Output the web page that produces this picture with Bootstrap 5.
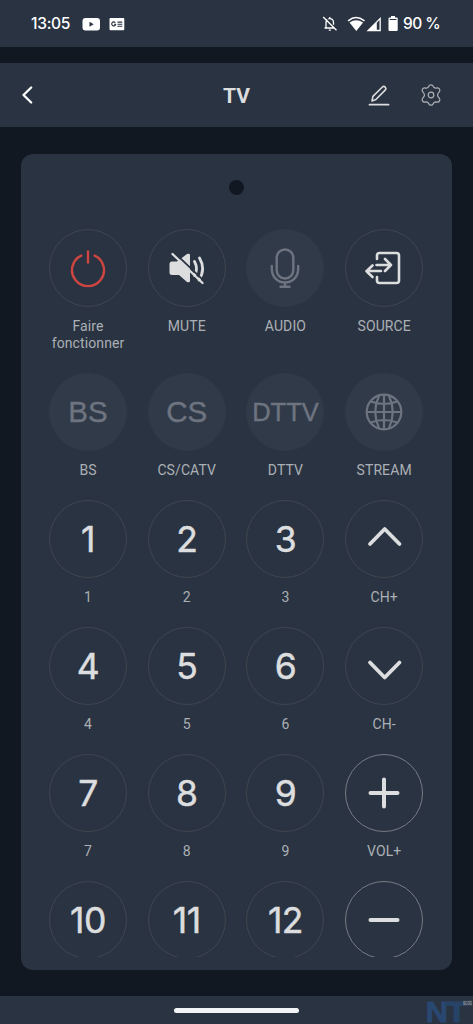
<!DOCTYPE html>
<html lang="fr">
<head>
<meta charset="utf-8">
<meta name="viewport" content="width=device-width, initial-scale=1">
<title>TV</title>
<link href="https://cdn.jsdelivr.net/npm/bootstrap@5.3.0/dist/css/bootstrap.min.css" rel="stylesheet">
<style>
  :root { --surface: #2a3341; --ground: #121822; --ink: #dcdddf; --soft: #aab0b5; --off: #6d7480; }
  body { background: var(--ground); color: var(--ink); font-family: Roboto, sans-serif; height: 1024px; overflow: hidden; }
  svg { display: block; flex: none; fill: none; stroke: currentColor; stroke-linecap: round; stroke-linejoin: round; }
  .surface { background: var(--surface); }
  .statusbar { height: 47px; padding: 0 33px 0 31px; color: #fff; }
  .clock { font: 500 15.6px/1 Inter, sans-serif; letter-spacing: -.3px; width: 41px; white-space: nowrap; }
  .level { font: 500 15.5px/1 Inter, sans-serif; letter-spacing: -.6px; white-space: nowrap; }
  .titlebar { height: 64px; margin-top: 16px; padding: 0 31px 0 20px; }
  .titlebar h1 { font: 700 21px/1 Roboto, sans-serif; width: 60px; padding-top: 2px; }
  .side-left { width: 186.5px; color: #fff; }
  .side-right { width: 175.5px; }
  .gear { color: #aeb1b6; }
  .power { color: #cd4540; }
  .remote { width: 431px; height: 816px; margin: 27px 0 0 21px; border-radius: 12px; padding: 26px 18.5px 13px 17.7px; }
  .led { width: 15px; height: 15px; border-radius: 50%; background: var(--ground); }
  .keys { height: 728px; margin-top: 34px; overflow: hidden; }
  .keys .row { margin-top: -.5px; }
  .key { padding-bottom: 21px; text-align: center; }
  .disc { width: 78px; height: 78px; border-radius: 50%; border: 1px solid #404650; font: 400 35.5px/1 Inter, sans-serif; letter-spacing: -.5px; -webkit-text-stroke: .5px; color: var(--ink); background: none; padding: 0; }
  .digit { padding-top: 2px; }
  .disc.bright { border-color: #777b84; }
  .disc.off { background: #313a48; border-color: #313a48; color: var(--off); letter-spacing: 0; font: 29.5px/1 "Liberation Sans", sans-serif; -webkit-text-stroke: .4px; padding-top: 1px; }
  .disc.wide { font-size: 25.5px; padding-top: 3px; }
  .caption { font-size: 14px; line-height: 17px; margin-top: 11px; letter-spacing: .1px; color: var(--soft); }
  .navbar-zone { height: 28px; margin-top: 26px; position: relative; }
  .handle { width: 125px; height: 5px; border-radius: 3px; background: #f3f4f5; }
  .brandmark { position: absolute; right: 0; top: 0; font-family: "Liberation Sans", sans-serif; font-weight: 700; }
</style>
</head>
<body>
<header class="statusbar surface d-flex align-items-center">
  <span class="clock">13:05</span>
  <svg style="margin-left:10px" width="19" height="14" viewBox="0 0 19 14"><rect x=".5" y="1" width="17.500" height="12.500" rx="3" fill="#fff" stroke="none"/><path d="M7.500 4.700v5l4.200-2.500z" fill="#2a3341" stroke="none"/></svg>
  <svg style="margin-left:8px" width="16" height="14" viewBox="0 0 16 14"><rect x=".5" y="1" width="14.800" height="12.200" rx="1" fill="#fff" stroke="none"/><path d="M6.300 5.600A2 2 0 1 0 6.700 7.300H5.100M8.500 5.100h4.800M8.500 7.200h4.800M8.500 9.300h4.800" stroke="#2a3341" stroke-width="1.100" stroke-linecap="butt"/></svg>
  <div class="ms-auto d-flex align-items-center">
    <svg width="16" height="17" viewBox="0 0 16 17" stroke-width="1.300"><path d="M2.500 13h9.500M4 12.800V7.600q.1-2 1.200-3M6.300 3.800q5-.8 5.200 3.800v2.200M7.800 2v1.500M6.800 15.200h2M1.200 2l13.300 13.200" stroke-linecap="butt"/></svg>
    <svg style="margin-left:9px" width="19" height="16" viewBox="0 0 19 16"><path d="M1.500 4.600q7.300-6.200 15.600 0" stroke-width="1.400"/><path d="M2.500 6.600q6.600-4.800 13.600 0L9.300 15z" fill="#fff" stroke="none"/></svg>
    <svg width="15" height="16" viewBox="0 0 15 16"><path d="M.5 15.200L14.800 1v14.200z" fill="#fff" stroke="none"/><path d="M10.800 6.700l2.700-2.700v9.800h-2.700z" fill="#2a3341" stroke="none"/></svg>
    <svg style="margin-left:7px" width="11" height="17" viewBox="0 0 11 17"><path d="M3 1h4v1.500h1.700q1 0 1 1v11.500q0 1-1 1H1.500q-1 0-1-1V3.500q0-1 1-1H3z" fill="#fff" stroke="none"/><path d="M2.200 4.500h5.800" stroke="#2a3341"/></svg>
    <span class="level" style="margin-left:4px">90 %</span>
  </div>
</header>

<nav class="titlebar surface d-flex align-items-center justify-content-between">
  <div class="side-left"><svg width="16" height="20" viewBox="0 0 16 20" stroke-width="2.300"><path d="M11.200 2.500L3.500 10l7.700 7.500"/></svg></div>
  <h1 class="m-0 text-center">TV</h1>
  <div class="side-right d-flex justify-content-end">
    <svg width="22" height="22" viewBox="0 0 22 22" stroke-width="1.600"><path d="M1.500 20.700h19" stroke-width="1.800"/><path d="M4 16.900l.9-4.500L14.400 3q1.400-1.200 2.800.1 1.400 1.400.2 2.800L7.900 15.500z"/></svg>
    <svg class="gear" style="margin-left:30px" width="22" height="22" viewBox="0 0 22 22" stroke-width="1.200"><path d="M8.800 2.300Q9.300.8 11 .8t2.200 1.500q.6 1.700 2.300 1.900 1.100 0 2-.3 1.200-.2 2 1.200t0 2.400c-1.600 1.700-2 2.100-2 3.500s.4 1.800 2 3.500q.8 1 0 2.400t-2 1.200q-.9-.3-2-.3-1.700.2-2.300 1.900-.500 1.500-2.200 1.500t-2.200-1.500q-.6-1.700-2.300-1.900-1.100 0-2 .3-1.200.2-2-1.200t0-2.400c1.600-1.700 2-2.100 2-3.500s-.4-1.800-2-3.500q-.8-1 0-2.400t2-1.200q.9.3 2 .3 1.700-.2 2.300-1.900z"/><circle cx="11" cy="11" r="2.800"/></svg>
  </div>
</nav>

<main class="remote surface">
  <div class="led mx-auto"></div>
  <div class="keys">
    <div class="row row-cols-4 g-0">
      <div class="col key"><button class="disc mx-auto d-flex align-items-center justify-content-center"><svg class="power" width="40" height="40" viewBox="0 0 40 40" stroke-width="2.400"><path d="M13.300 7.600a16 16 0 1 0 13.400 0M20 3.500v11"/></svg></button><div class="caption">Faire<br>fonctionner</div></div>
      <div class="col key"><button class="disc mx-auto d-flex align-items-center justify-content-center"><svg width="40" height="40" viewBox="0 0 40 40"><path d="M5 13.500h5L20 6q3-1 3 1v26q0 2-3 1l-8-7H5q-2.500 0-2.500-2.500V16Q2.500 13.500 5 13.500z" fill="currentColor" stroke="none"/><path d="M27.500 13.500q4 7.500 0 14M32.500 10q6.500 11-.5 22" stroke-width="2.800"/><path d="M7 4.300l30 28.500" stroke="#2a3341" stroke-width="1.800"/><path d="M5.500 6l30 29" stroke-width="2.300"/></svg></button><div class="caption">MUTE</div></div>
      <div class="col key"><button class="disc off mx-auto d-flex align-items-center justify-content-center"><svg width="30" height="42" viewBox="0 0 30 42" stroke-width="2.400"><rect x="6.700" y="2.500" width="16.600" height="29" rx="8.300"/><path d="M1.800 19v3C2 30.500 8 35.500 15 35.500s13-5 13.200-13.500v-3M15 35.500v4M10.500 39.700h9"/></svg></button><div class="caption">AUDIO</div></div>
      <div class="col key"><button class="disc mx-auto d-flex align-items-center justify-content-center"><svg width="40" height="40" viewBox="0 0 40 40" stroke-width="2.600"><path d="M13 11V7.500Q13 5 15.500 5h17Q35 5 35 7.500v25q0 2.500-2.500 2.500h-17q-2.500 0-2.500-2.500V29M12.500 17h14.500M21 11l6 6-6 6M17 23H2.500M8.500 17.500l-6 5.700 6 5.800"/></svg></button><div class="caption">SOURCE</div></div>

      <div class="col key"><button class="disc off mx-auto d-flex align-items-center justify-content-center">BS</button><div class="caption">BS</div></div>
      <div class="col key"><button class="disc off mx-auto d-flex align-items-center justify-content-center">CS</button><div class="caption">CS/CATV</div></div>
      <div class="col key"><button class="disc off wide mx-auto d-flex align-items-center justify-content-center">DTTV</button><div class="caption">DTTV</div></div>
      <div class="col key"><button class="disc off mx-auto d-flex align-items-center justify-content-center"><svg width="38" height="38" viewBox="0 0 38 38" stroke-width="2.200"><circle cx="19" cy="19" r="17.300"/><path d="M19 2v34M2 19h34M6 8.500q13 5 26 0M6 29.500q13-5 26 0"/><path d="M14 2.800Q6.500 19 14 35.200M24 2.800q7.500 16.200 0 32.400"/></svg></button><div class="caption">STREAM</div></div>

      <div class="col key"><button class="disc digit mx-auto d-flex align-items-center justify-content-center">1</button><div class="caption">1</div></div>
      <div class="col key"><button class="disc digit mx-auto d-flex align-items-center justify-content-center">2</button><div class="caption">2</div></div>
      <div class="col key"><button class="disc digit mx-auto d-flex align-items-center justify-content-center">3</button><div class="caption">3</div></div>
      <div class="col key"><button class="disc mx-auto d-flex align-items-center justify-content-center"><svg width="40" height="40" viewBox="0 0 40 40" stroke-width="3.800"><path d="M6 25L20.700 10l14.800 15"/></svg></button><div class="caption">CH+</div></div>

      <div class="col key"><button class="disc digit mx-auto d-flex align-items-center justify-content-center">4</button><div class="caption">4</div></div>
      <div class="col key"><button class="disc digit mx-auto d-flex align-items-center justify-content-center">5</button><div class="caption">5</div></div>
      <div class="col key"><button class="disc digit mx-auto d-flex align-items-center justify-content-center">6</button><div class="caption">6</div></div>
      <div class="col key"><button class="disc mx-auto d-flex align-items-center justify-content-center"><svg width="40" height="40" viewBox="0 0 40 40" stroke-width="3.800"><path d="M6 16.500l14.700 15 14.800-15"/></svg></button><div class="caption">CH-</div></div>

      <div class="col key"><button class="disc digit mx-auto d-flex align-items-center justify-content-center">7</button><div class="caption">7</div></div>
      <div class="col key"><button class="disc digit mx-auto d-flex align-items-center justify-content-center">8</button><div class="caption">8</div></div>
      <div class="col key"><button class="disc digit mx-auto d-flex align-items-center justify-content-center">9</button><div class="caption">9</div></div>
      <div class="col key"><button class="disc bright mx-auto d-flex align-items-center justify-content-center"><svg width="40" height="40" viewBox="0 0 40 40" stroke-width="4"><path d="M6.500 20h27M20 6.500v27"/></svg></button><div class="caption">VOL+</div></div>

      <div class="col key"><button class="disc digit mx-auto d-flex align-items-center justify-content-center">10</button></div>
      <div class="col key"><button class="disc digit mx-auto d-flex align-items-center justify-content-center">11</button></div>
      <div class="col key"><button class="disc digit mx-auto d-flex align-items-center justify-content-center">12</button></div>
      <div class="col key"><button class="disc bright mx-auto d-flex align-items-center justify-content-center"><svg width="40" height="40" viewBox="0 0 40 40" stroke-width="4"><path d="M6.500 20h27"/></svg></button></div>
    </div>
  </div>
</main>

<footer class="navbar-zone surface d-flex align-items-center justify-content-center">
  <div class="handle"></div>
  <svg class="brandmark" width="48" height="28" viewBox="0 0 48 28" overflow="visible">
    <g stroke-width=".8" font-size="29">
      <text transform="translate(.8 25.500) scale(1.060 1)" fill="#294871" stroke="#294871">N</text>
      <text transform="translate(21 25.500) scale(1.200 1)" fill="#274367" stroke="#274367">T</text>
    </g>
    <rect x="38" y="4.500" width="9" height="5" fill="#3b4656" stroke="none"/>
    <text transform="translate(38.300 8.700) scale(.64 1)" font-size="4.800" fill="#8b939d" stroke="none">BLOG</text>
  </svg>
</footer>
<script src="https://cdn.jsdelivr.net/npm/bootstrap@5.3.0/dist/js/bootstrap.bundle.min.js"></script>
</body>
</html>
